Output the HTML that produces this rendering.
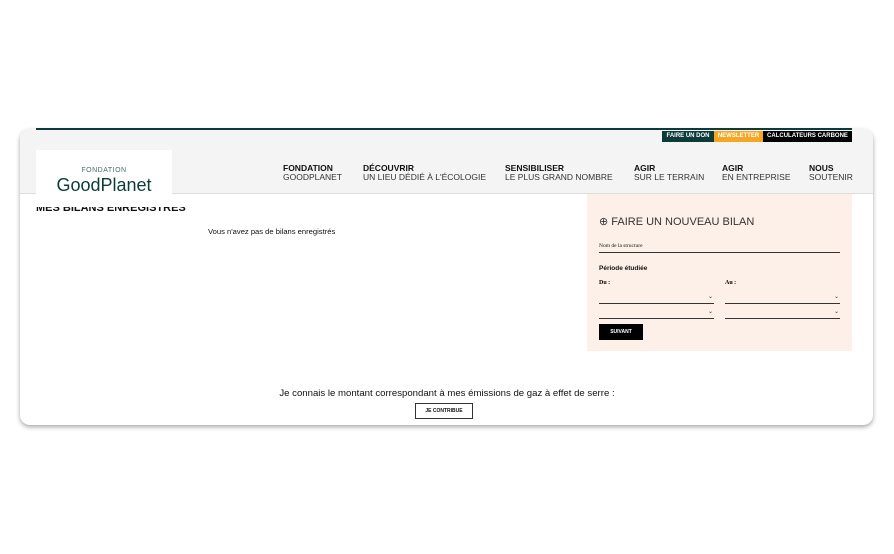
<!DOCTYPE html>
<html><head><meta charset="utf-8"><style>
body{margin:0;width:894px;height:554px;background:#fff;font-family:"Liberation Sans",sans-serif;position:relative;overflow:hidden}
.a{position:absolute}
.card{left:20px;top:129px;width:853px;height:296px;border-radius:10px;background:#fff;box-shadow:0 2px 5px rgba(0,0,0,.35);overflow:hidden}
.hdr{left:20px;top:129px;width:853px;height:64px;background:#f4f4f4;border-bottom:1px solid #ddd;border-radius:10px 10px 0 0}
.nav{font-size:8.5px;line-height:9px;color:#333;white-space:nowrap}
.nav b{color:#111;display:block}
.tb{top:131px;height:11px;font-size:6px;font-weight:bold;color:#fff;line-height:11px;text-align:center}
.sel{height:1px;background:#333;width:115px}
.chev{font-size:6px;color:#333}
</style></head><body>
<div class="a card"></div>
<div class="a hdr"></div>
<div class="a" style="left:36px;top:128px;width:816px;height:2px;background:#0d3b3a"></div>
<div class="a tb" style="left:662px;width:52px;background:#0d3b3a">FAIRE UN DON</div>
<div class="a tb" style="left:714px;width:49px;background:#f5a623">NEWSLETTER</div>
<div class="a tb" style="left:763px;width:89px;background:#000">CALCULATEURS CARBONE</div>
<div class="a" style="left:36px;top:150px;width:136px;height:50px;background:#fff"></div>
<div class="a" style="left:36px;top:167px;width:136px;text-align:center;font-size:7px;letter-spacing:.5px;color:#4a6b6a">FONDATION</div>
<div class="a" style="left:36px;top:175px;width:136px;text-align:center;font-size:18px;color:#0d3b3a">GoodPlanet</div>
<div class="a nav" style="left:283px;top:164px"><b>FONDATION</b>GOODPLANET</div>
<div class="a nav" style="left:363px;top:164px"><b>DÉCOUVRIR</b>UN LIEU DÉDIÉ À L'ÉCOLOGIE</div>
<div class="a nav" style="left:505px;top:164px"><b>SENSIBILISER</b>LE PLUS GRAND NOMBRE</div>
<div class="a nav" style="left:634px;top:164px"><b>AGIR</b>SUR LE TERRAIN</div>
<div class="a nav" style="left:722px;top:164px"><b>AGIR</b>EN ENTREPRISE</div>
<div class="a nav" style="left:809px;top:164px"><b>NOUS</b>SOUTENIR</div>
<div class="a" style="left:36px;top:207px;height:8px;overflow:hidden;width:150px"><div style="margin-top:-5px;font-size:11px;font-weight:bold;color:#111">MES BILANS ENREGISTRÉS</div></div>
<div class="a" style="left:208px;top:227px;font-size:7.6px;color:#111">Vous n'avez pas de bilans enregistrés</div>
<div class="a" style="left:587px;top:194px;width:265px;height:157px;background:#fdf0e8"></div>
<div class="a" style="left:599px;top:215px;font-size:11px;color:#333">⊕ FAIRE UN NOUVEAU BILAN</div>
<div class="a" style="left:599px;top:243px;font-size:5.5px;font-family:'Liberation Serif',serif;color:#111">Nom de la structure</div>
<div class="a" style="left:599px;top:252px;width:241px;height:1px;background:#333"></div>
<div class="a" style="left:599px;top:265px;font-size:6.5px;font-weight:bold;color:#111">Période étudiée</div>
<div class="a" style="left:599px;top:280px;font-size:6px;font-weight:bold;font-family:'Liberation Serif',serif">Du :</div>
<div class="a" style="left:725px;top:280px;font-size:6px;font-weight:bold;font-family:'Liberation Serif',serif">Au :</div>
<div class="a sel" style="left:599px;top:303px"></div><div class="a sel" style="left:725px;top:303px"></div>
<div class="a sel" style="left:599px;top:318px"></div><div class="a sel" style="left:725px;top:318px"></div>
<div class="a chev" style="left:708px;top:293px">⌄</div><div class="a chev" style="left:834px;top:293px">⌄</div>
<div class="a chev" style="left:708px;top:308px">⌄</div><div class="a chev" style="left:834px;top:308px">⌄</div>
<div class="a" style="left:599px;top:324px;width:44px;height:16px;background:#000;color:#fff;font-size:5px;font-weight:bold;line-height:16px;text-align:center">SUIVANT</div>
<div class="a" style="left:0;width:894px;top:388px;text-align:center;font-size:9.6px;color:#111">Je connais le montant correspondant à mes émissions de gaz à effet de serre :</div>
<div class="a" style="left:415px;top:403px;width:56px;height:14px;border:1px solid #333;font-size:5px;font-weight:bold;line-height:14px;text-align:center;color:#111">JE CONTRIBUE</div>
</body></html>
